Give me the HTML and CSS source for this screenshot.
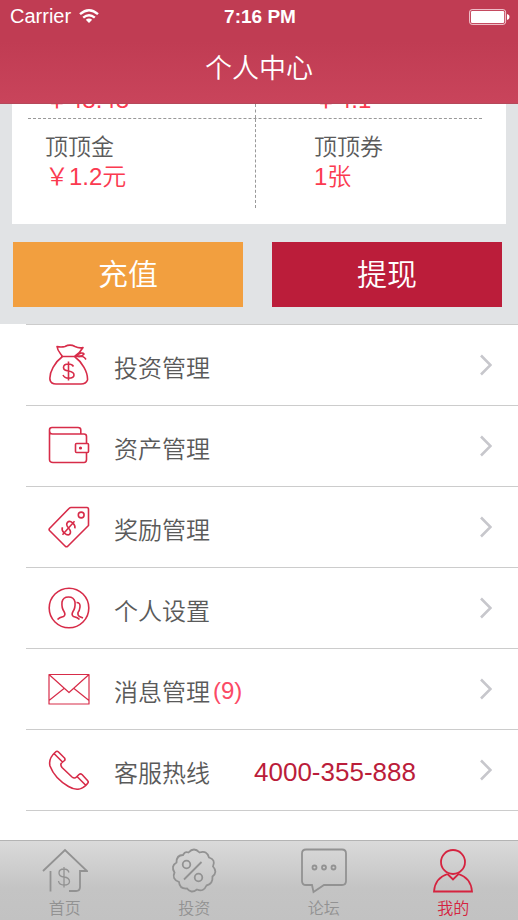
FILE: index.html
```
<!DOCTYPE html>
<html lang="zh-CN">
<head>
<meta charset="utf-8">
<meta name="viewport" content="width=device-width, initial-scale=1">
<title>个人中心</title>
<link rel="stylesheet" href="styles.css">
</head>
<body>
<header class="header">
  <div class="status">
    <div class="carrier">Carrier
      <svg width="20" height="15" viewBox="0 0 20 15" fill="none" stroke="#fff" stroke-width="2.4"><path d="M1 5.2Q10-2.6 19 5.2M4.2 8.7Q10 3.8 15.8 8.7"/><path d="M6.8 10.8Q10 8 13.2 10.8L10 14Z" fill="#fff" stroke="none"/></svg>
    </div>
    <div class="time">7:16 PM</div>
    <div class="battery">
      <svg width="41" height="16" viewBox="0 0 41 16"><rect x=".6" y=".6" width="36" height="14.8" rx="2.5" fill="none" stroke="#f3cdd4"/><rect x="2" y="2" width="33.200" height="12" rx="1.200" fill="#fff"/><path d="M38 5q2.500.6 2.500 3T38 11Z" fill="#fff"/></svg>
    </div>
  </div>
  <h1 class="title">个人中心</h1>
</header>

<main class="main">
  <section class="summary">
    <div class="card">
      <div class="card-row card-row-cut">
        <div class="cell"><span class="amount">￥48.48</span></div>
        <div class="cell"><span class="amount">￥4.1</span></div>
      </div>
      <div class="card-row">
        <div class="cell"><span class="label">顶顶金</span><span class="amount">￥1.2元</span></div>
        <div class="cell"><span class="label">顶顶券</span><span class="amount">1张</span></div>
      </div>
    </div>
    <div class="actions">
      <button class="btn btn-recharge" type="button">充值</button>
      <button class="btn btn-withdraw" type="button">提现</button>
    </div>
  </section>

  <nav class="list" aria-label="个人中心">
    <a class="item" href="#invest">
      <svg class="icon" viewBox="0 0 42 42"><path d="M14.500 12.500C12 9 9.500 7 9 2.500Q13 3.500 17 2.500Q22-.2 27 2.500Q31 4.500 35 3.500Q32 9 26.500 12.500M14.500 12.500C7 18 1 28 2 36Q3 40 8 40H33Q38 40 39.500 36C40 28 34 18 26.500 12.500M13 12.500H27Q34 7 36 10Q33 14 28 12M28 12Q35 11 38 15.500"/><path d="M25.500 22.500Q24 20 20.500 20Q15.500 20 15.500 23.500Q15.500 26.500 20.500 27Q26 27.800 26 31Q26 34.200 20.500 34.200Q16.500 34.200 15 31M20.500 17.500V36.500"/></svg>
      <span class="name">投资管理</span>
      <svg class="arrow" viewBox="0 0 12 22"><path d="M1 1.500L10.500 11L1 20.500"/></svg>
    </a>
    <a class="item" href="#assets">
      <svg class="icon" viewBox="0 0 42 42"><path d="M1.500 9V5Q1.500 2.500 4 2.500H30Q32.800 2.500 32.800 5V9M4.500 9H36Q38.500 9 38.500 11.500V18.500M38.500 27.500V34.500Q38.500 37.500 36 37.500H5Q1.500 37.500 1.500 34.500V6Q1.500 9 4.500 9M28.500 18.500H39.500Q40.500 18.500 40.500 19.500V26.500Q40.500 27.500 39.500 27.500H28.500Q27.500 27.500 27.500 26.500V19.500Q27.500 18.500 28.500 18.500Z"/><circle cx="32.500" cy="23" r=".8"/></svg>
      <span class="name">资产管理</span>
      <svg class="arrow" viewBox="0 0 12 22"><path d="M1 1.500L10.500 11L1 20.500"/></svg>
    </a>
    <a class="item" href="#rewards">
      <svg class="icon" viewBox="0 0 42 42"><path d="M23 1.500H39Q40.500 1.500 40.500 3.500V19.500L19.500 40.500Q18.500 41 17.500 40.500L1.500 24.500Q.7 23.500 1.500 22.500L21 2.500Q22 1.500 23 1.500Z"/><circle cx="33.200" cy="9" r="2.900"/><path transform="rotate(42 20.500 22)" d="M25.500 18Q24 15.500 20.500 15.500Q16 15.500 16 18.500Q16 21.500 20.500 22Q25.500 22.700 25.500 25.700Q25.500 28.500 20.500 28.500Q16.500 28.500 15.500 25.500M20.500 13V31"/></svg>
      <span class="name">奖励管理</span>
      <svg class="arrow" viewBox="0 0 12 22"><path d="M1 1.500L10.500 11L1 20.500"/></svg>
    </a>
    <a class="item" href="#settings">
      <svg class="icon" viewBox="0 0 42 42"><circle cx="21" cy="21" r="19.800"/><path d="M9.500 32.500Q11 30.500 15.500 29.500Q18 28 16 24.500Q13.500 21 14 15Q15 10 20.500 10Q26 10 27 15Q27.500 21 25 24.500Q23 28 25.500 29.500Q30 30.500 31.500 32.500M28.500 15.500Q32.500 15.500 32 20Q31.500 24 30 25.500Q29.500 28.500 31.500 29.500L35 31"/></svg>
      <span class="name">个人设置</span>
      <svg class="arrow" viewBox="0 0 12 22"><path d="M1 1.500L10.500 11L1 20.500"/></svg>
    </a>
    <a class="item" href="#messages">
      <svg class="icon icon-thin" viewBox="0 0 42 42"><path d="M1 6.500H41V36H1ZM1 6.500L21 24.500L41 6.500M1 32.500L16 20.500M41 32.500L26 20.500"/></svg>
      <span class="name">消息管理</span><span class="count">(9)</span>
      <svg class="arrow" viewBox="0 0 12 22"><path d="M1 1.500L10.500 11L1 20.500"/></svg>
    </a>
    <a class="item" href="tel:4000355888">
      <svg class="icon" viewBox="0 0 42 42"><path d="M7.500 3Q9 1.500 10.500 3L16.500 9Q17.500 10.500 16.500 11.500L13.500 14Q12 16 14 18.500L24 28Q26.500 30 28.500 28L31 25.500Q32.500 24.300 34 25.500L39.500 31.500Q41 33 39.500 34.500C35 40.500 28 42 20.500 37.500C12 32.500 5 25 2 17C.5 11 3 7 7.500 3ZM6 4.500L14.500 13M29 27.500L37.500 36"/></svg>
      <span class="name">客服热线</span><span class="phone">4000-355-888</span>
      <svg class="arrow" viewBox="0 0 12 22"><path d="M1 1.500L10.500 11L1 20.500"/></svg>
    </a>
    <a class="item" href="#more" aria-label="更多">
      <svg class="arrow" viewBox="0 0 12 22"><path d="M1 1.500L10.500 11L1 20.500"/></svg>
    </a>
  </nav>
</main>

<nav class="tabs" aria-label="主导航">
  <a class="tab" href="#home">
    <svg class="tab-icon" viewBox="0 0 46 46"><path d="M1 23L23 2L45 23H38V39Q38 43 34 43H27M8.500 23V43.500"/><path d="M27 24.500Q26 21 22 21Q17 21 17 25Q17 28.500 22 29Q27.500 29.700 27.500 33.500Q27.500 37 22 37Q17 37 16.500 33M22 19V39.500" stroke-width="1.300"/></svg>
    <span>首页</span>
  </a>
  <a class="tab" href="#projects">
    <svg class="tab-icon" viewBox="0 0 46 46"><path d="M17.500 4.500Q23-1.500 28.500 4.500Q36 2 38 9.500Q45 11.500 42 18.500Q47 24 41.500 28.500Q42 36 35.500 37.500Q32.500 44.500 26 41.500Q20 46 16 40.500Q8.500 41 8 34Q.5 31 3.500 24.500Q-.5 18 5.500 14.500Q5.500 7 12 7Q14 3 17.500 4.500Z"/><path d="M30.500 14L13 31.500"/><circle cx="15.500" cy="16.500" r="3.800"/><circle cx="27.500" cy="29.500" r="3.800"/></svg>
    <span>投资</span>
  </a>
  <a class="tab" href="#forum">
    <svg class="tab-icon" viewBox="0 0 46 46"><path d="M5 1.500H41Q45 1.500 45 5.500V33Q45 37 41 37H23L12.500 44L11 37H5Q1 37 1 33V5.500Q1 1.500 5 1.500Z"/><circle cx="13.500" cy="19.500" r="2"/><circle cx="23" cy="19.500" r="2"/><circle cx="32.500" cy="19.500" r="2"/></svg>
    <span>论坛</span>
  </a>
  <a class="tab tab-active" href="#me" aria-current="page">
    <svg class="tab-icon" viewBox="0 0 46 46"><circle cx="23" cy="14" r="12"/><path d="M17.500 26Q5 30 4 43.500H42Q41 30 28.500 26L23 31.500L17.500 26"/></svg>
    <span>我的</span>
  </a>
</nav>
</body>
</html>
```
FILE: styles.css
```
* {
  box-sizing: border-box;
}

body {
  display: flex;
  flex-direction: column;
  height: 100vh;
  margin: 0;
  overflow: hidden;
  background: #fff;
  color: #5a5a5a;
  font-family: "Liberation Sans", "Noto Sans CJK SC", sans-serif;
  font-weight: 350;
}

a {
  color: inherit;
  text-decoration: none;
}

svg {
  display: block;
  flex: none;
}

.header {
  flex: none;
  height: 104px;
  border-bottom: 1px solid #b5485a;
  background: linear-gradient(#c03c53 40%, #c9445b);
  color: #fff;
}

.status {
  display: grid;
  grid-template-columns: 1fr auto 1fr;
  align-items: center;
  height: 33px;
  padding: 0 8px 0 10px;
  font-size: 20px;
}

.carrier {
  display: flex;
  align-items: center;
  gap: 8px;
}

.time {
  font-size: 19px;
  font-weight: 700;
}

.battery {
  justify-self: end;
}

.title {
  margin: 0;
  font-size: 27px;
  font-weight: 350;
  line-height: 72px;
  text-align: center;
}

.main {
  flex: 1;
  min-height: 0;
  overflow: hidden;
}

.summary {
  padding: 0 12px 17px;
  background: #e1e3e5;
}

.card {
  padding: 0 24px 16px 16px;
  background: #fff;
}

.card-row {
  display: grid;
  grid-template-columns: 1fr 1fr;
  height: 89px;
}

.cell {
  display: flex;
  flex-direction: column;
  padding: 13px 0 0 17px;
}

.cell + .cell {
  padding-left: 58px;
  border-left: 1px dashed #999;
}

.card-row-cut {
  grid-template-rows: 14px;
  height: 15px;
  overflow: hidden;
  border-bottom: 1px dashed #999;
}

.card-row-cut .cell {
  justify-content: flex-end;
  height: 14px;
  padding-top: 0;
  padding-bottom: 3px;
}

.label {
  font-size: 23px;
  line-height: 30px;
}

.amount {
  color: #fb3a50;
  font-size: 24px;
  line-height: 30px;
}

.actions {
  display: grid;
  grid-template-columns: 1fr 1fr;
  gap: 29px;
  padding: 18px 4px 0 1px;
}

.btn {
  height: 65px;
  padding: 0 0 6px;
  border: 0;
  color: #fff;
  font: inherit;
  font-size: 30px;
}

.btn-recharge {
  background: #f29f3f;
}

.btn-withdraw {
  background: #bb1d3a;
}

.list {
  padding-left: 26px;
}

.item {
  display: flex;
  align-items: center;
  height: 81px;
  padding: 0 26px 0 22px;
  border-top: 1px solid #ccc;
}

.icon {
  width: 42px;
  height: 42px;
  fill: none;
  stroke: #d72c49;
  stroke-width: 1.6;
  stroke-linejoin: round;
}

.icon-thin {
  stroke-width: 1.2;
}

.name {
  margin-left: 24px;
  padding-top: 2px;
  font-size: 24px;
}

.count {
  margin-left: 3px;
  padding-top: 4px;
  color: #fb4a66;
  font-size: 24px;
}

.phone {
  margin-left: 44px;
  padding-top: 4px;
  color: #bb1d3a;
  font-size: 26px;
}

.arrow {
  width: 12px;
  height: 22px;
  margin-left: auto;
  fill: none;
  stroke: #c7c7cc;
  stroke-width: 2.6;
}

.tabs {
  display: grid;
  flex: none;
  grid-template-columns: repeat(4, 1fr);
  height: 80px;
  border-top: 1px solid #b4b4b4;
  background: linear-gradient(#dadada, #c4c4c4 60%, #c2c2c2);
}

.tab {
  display: flex;
  flex-direction: column;
  align-items: center;
  padding-top: 7px;
  color: #929292;
  font-size: 16px;
  line-height: 30px;
}

.tab-icon {
  width: 46px;
  height: 46px;
  fill: none;
  stroke: currentColor;
  stroke-width: 1.8;
}

.tab-active {
  color: #d5233f;
}
```
